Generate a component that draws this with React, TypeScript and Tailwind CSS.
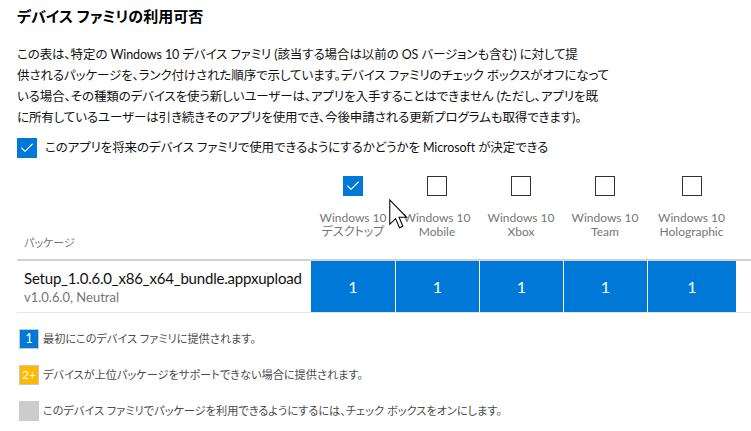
import { Check } from "lucide-react";

const font = "font-['Lato','Noto_Sans_CJK_JP',sans-serif] [font-feature-settings:'palt']";

const families = [
  { name: "デスクトップ", checked: true, w: "w-[84px]" },
  { name: "Mobile", checked: false, w: "w-[84px]" },
  { name: "Xbox", checked: false, w: "w-[84px]" },
  { name: "Team", checked: false, w: "w-[84px]" },
  { name: "Holographic", checked: false, w: "w-[89px]" },
];

const intro = [
  "この表は、特定の Windows 10 デバイス ファミリ (該当する場合は以前の OS バージョンも含む) に対して提",
  "供されるパッケージを、ランク付けされた順序で示しています。デバイス ファミリのチェック ボックスがオフになって",
  "いる場合、その種類のデバイスを使う新しいユーザーは、アプリを入手することはできません (ただし、アプリを既",
  "に所有しているユーザーは引き続きそのアプリを使用でき、今後申請される更新プログラムも取得できます)。",
];

function Box({ checked }: { checked: boolean }) {
  return checked ? (
    <div className="w-5 h-5 shrink-0 bg-[#0078d7] flex items-center justify-center">
      <Check className="w-4 h-4 text-white" strokeWidth={1.6} />
    </div>
  ) : (
    <div className="w-5 h-5 shrink-0 border-[1.5px] border-[#333333] bg-white" />
  );
}

function Cursor() {
  return (
    <svg
      className="absolute left-[389px] top-[199px] pointer-events-none"
      width="19"
      height="30"
      viewBox="0 0 12.5 19.5"
    >
      <path
        d="M0.5 0.5 L0.5 16.5 L4.3 12.8 L6.9 18.8 L9.1 17.8 L6.6 11.9 L11.6 11.9 Z"
        fill="white"
        stroke="black"
        strokeWidth="0.7"
      />
    </svg>
  );
}

export default function App() {
  return (
    <div className={`relative w-[751px] h-[431px] bg-white overflow-hidden pl-[17px] ${font}`}>
      <h1 className="pt-[3px] text-[15px] font-bold text-black leading-[26px]">
        デバイス ファミリの利用可否
      </h1>

      <div className="mt-[15px] text-[12.5px] leading-[21px] tracking-[-0.1px] text-[#111111]">
        {intro.map((line) => (
          <div key={line} className="whitespace-nowrap">
            {line}
          </div>
        ))}
      </div>

      <label className="mt-[10px] h-5 flex items-center gap-[8px] text-[12.5px] tracking-[-0.1px] text-[#111111]">
        <Box checked />
        <span>このアプリを将来のデバイス ファミリで使用できるようにするかどうかを Microsoft が決定できる</span>
      </label>

      {/* Table */}
      <div className="mt-[18px]">
        <div className="flex items-end">
          <div className="w-[294px] pl-[7px] pb-[9px] text-[11px] leading-[14px] text-[#767676]">パッケージ</div>
          {families.map((f) => (
            <div key={f.name} className={`${f.w} flex flex-col items-center pb-[20px]`}>
              <Box checked={f.checked} />
              <div className="mt-[15px] text-[12px] leading-[14px] text-[#767676] text-center">
                <div className="h-[14px]">Windows 10</div>
                <div className="h-[14px]">{f.name}</div>
              </div>
            </div>
          ))}
        </div>

        <div className="flex h-[54px] border-t-2 border-b border-t-[#d2d2d2] border-b-[#e6e6e6]">
          <div className="w-[294px] pl-[7px] flex flex-col justify-center pt-[1px]">
            <div className="text-[15px] leading-[20px] tracking-[-0.2px] text-[#111111] whitespace-nowrap">
              Setup_1.0.6.0_x86_x64_bundle.appxupload
            </div>
            <div className="text-[13px] leading-[18px] text-[#767676]">v1.0.6.0, Neutral</div>
          </div>
          {families.map((f, i) => (
            <div
              key={f.name}
              className={`${f.w} ${i > 0 ? "border-l border-white" : ""} bg-[#0078d7] flex items-center justify-center text-[16px] text-white`}
            >
              1
            </div>
          ))}
        </div>
      </div>

      {/* Legend */}
      <div className="mt-[16px] flex flex-col gap-[16px] text-[11.2px] text-[#4c4c4c]">
        <div className="h-5 flex items-center gap-[4px] pl-[2px]">
          <div className="w-5 h-5 border border-[#c8c8c8] bg-[#0078d7] text-white text-[13px] flex items-center justify-center">
            1
          </div>
          <span>最初にこのデバイス ファミリに提供されます。</span>
        </div>
        <div className="h-5 flex items-center gap-[4px] pl-[2px]">
          <div className="w-5 h-5 border border-[#c8c8c8] bg-[#ffb900] text-white text-[12px] flex items-center justify-center">
            2+
          </div>
          <span>デバイスが上位パッケージをサポートできない場合に提供されます。</span>
        </div>
        <div className="h-5 flex items-center gap-[4px] pl-[2px]">
          <div className="w-5 h-5 bg-[#cccccc]" />
          <span>このデバイス ファミリでパッケージを利用できるようにするには、チェック ボックスをオンにします。</span>
        </div>
      </div>

      <Cursor />
    </div>
  );
}
